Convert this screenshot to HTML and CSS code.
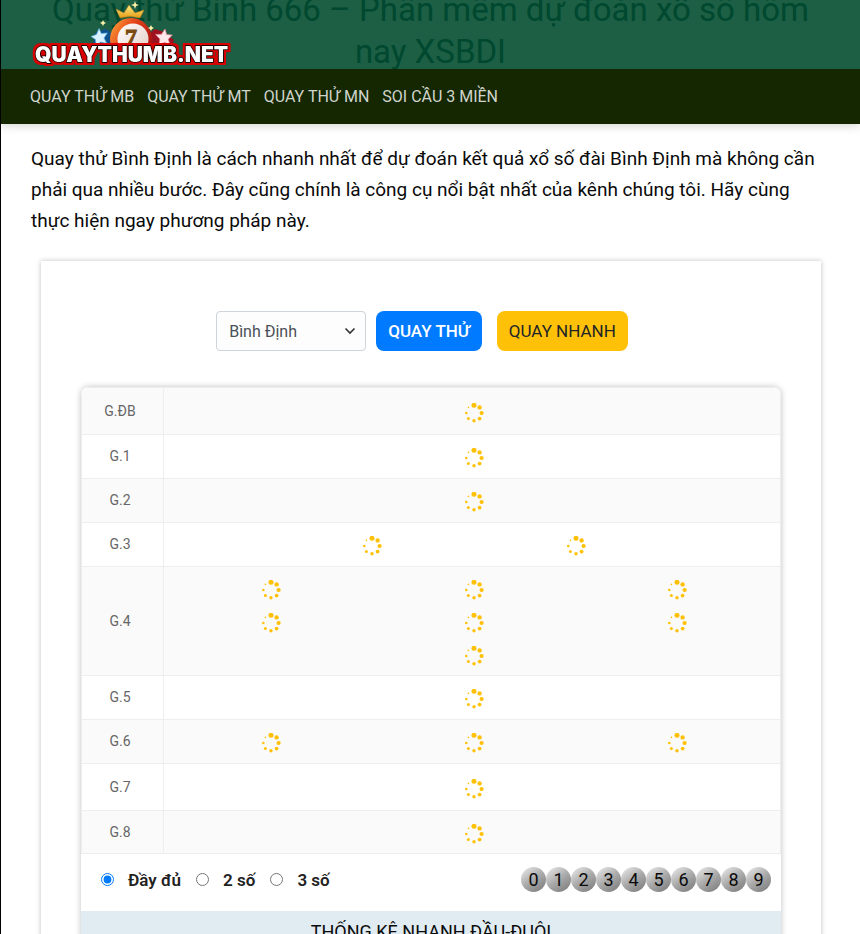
FILE: index.html
```
<!DOCTYPE html>
<html lang="vi">
<head>
  <meta charset="UTF-8" />
  <meta name="viewport" content="width=device-width, initial-scale=1.0" />
  <title>Quay thử Bình Định</title>
  <link rel="stylesheet" href="styles.css">
</head>
<body>
  <!-- Chấm tròn loading dùng chung -->
  <svg class="defs" aria-hidden="true">
    <symbol id="spin" viewBox="0 0 20 20">
      <circle cx="10" cy="2.3" r="2.5"/>
      <circle cx="15.6" cy="4.4" r="2.2"/>
      <circle cx="17.6" cy="10" r="2.1"/>
      <circle cx="15.6" cy="15.6" r="1.9"/>
      <circle cx="10" cy="17.7" r="1.7"/>
      <circle cx="4.4" cy="15.6" r="1.5"/>
      <circle cx="2.3" cy="10" r="1.3"/>
      <circle cx="4.4" cy="4.4" r="0.8"/>
    </symbol>
  </svg>

  <header class="header">
    <div class="banner">
      <h1 class="title">Quay thử Bình 666 – Phần mềm dự đoán xổ số hôm nay XSBDI</h1>
      <a class="logo" href="#" aria-label="QUAYTHUMB.NET">
        <svg width="206" height="69" viewBox="0 0 206 69">
          <defs>
            <linearGradient id="gold" x1="0" y1="0" x2="0" y2="1">
              <stop offset="0" stop-color="#fff08a"/>
              <stop offset="1" stop-color="#e39a14"/>
            </linearGradient>
            <linearGradient id="red" x1="0" y1="0" x2="1" y2="0.6">
              <stop offset="0" stop-color="#ffb13c"/>
              <stop offset="0.45" stop-color="#e8481c"/>
              <stop offset="1" stop-color="#a90f10"/>
            </linearGradient>
            <linearGradient id="pearl" x1="0" y1="0" x2="1" y2="1">
              <stop offset="0" stop-color="#ffffff"/>
              <stop offset="1" stop-color="#e4cdc5"/>
            </linearGradient>
            <!-- viền đỏ quanh chữ -->
            <filter id="outline" x="-5%" y="-30%" width="110%" height="160%">
              <feMorphology in="SourceAlpha" operator="dilate" radius="2" result="big"/>
              <feFlood flood-color="#d80000"/>
              <feComposite in2="big" operator="in"/>
              <feMerge>
                <feMergeNode/>
                <feMergeNode in="SourceGraphic"/>
              </feMerge>
            </filter>
          </defs>
          <path d="M66 32l10-3 7 5v14H62z" fill="#11528c"/>
          <path d="M121 32l4-3 9 3 10 8-3 8h-22z" fill="#9c1220"/>
          <path d="M69 28.500l2.300 5 6-.5-3.300 5 2.800 5.500-6-1.500-4.800 3.500-.5-6-4.500-3 5.500-2z" fill="#d9f2ff" stroke="#5fb4e6" stroke-width="0.7"/>
          <path d="M135 29l1.700 5.500 5.600.5-4 4.200 1.700 5.600-5.500-2.300-5.500 2.500.8-6-4.300-4.500 6-.3z" fill="#ffe9ea" stroke="#e8808c" stroke-width="0.7"/>
          <circle cx="101" cy="39" r="21" fill="url(#red)"/>
          <circle cx="103" cy="39" r="15.500" fill="url(#pearl)"/>
          <path d="M90 18l-4-9 8 4 5-8 6 8 9-3-4 8q-10-3-20 0z" fill="url(#gold)" stroke="#c47d10" stroke-width="0.5"/>
          <path d="M105 1l1 3 3 1-3 1-1 3-1-3-3-1 3-1zM73 20l1 2 2 1-2 1-1 2-1-2-2-1 2-1zM121 25l1 2 2 1-2 1-1 2-1-2-2-1 2-1z" fill="#fff3a8"/>
          <text class="logo-seven" x="95" y="45">7</text>
          <g filter="url(#outline)">
            <text class="logo-text" x="5" y="62">QUAYTHUMB.NET</text>
          </g>
        </svg>
      </a>
    </div>
    <nav class="nav">
      <a href="#">QUAY THỬ MB</a>
      <a href="#">QUAY THỬ MT</a>
      <a href="#">QUAY THỬ MN</a>
      <a href="#">SOI CẦU 3 MIỀN</a>
    </nav>
  </header>

  <main class="main">
    <p class="intro">Quay thử Bình Định là cách nhanh nhất để dự đoán kết quả xổ số đài Bình Định mà không cần phải qua nhiều bước. Đây cũng chính là công cụ nổi bật nhất của kênh chúng tôi. Hãy cùng thực hiện ngay phương pháp này.</p>

    <section class="card">
      <form class="controls">
        <select class="province" aria-label="Chọn tỉnh">
          <option>Bình Định</option>
        </select>
        <button type="button" class="btn btn-primary">QUAY THỬ</button>
        <button type="button" class="btn btn-warning">QUAY NHANH</button>
      </form>

      <div class="result">
        <table class="prizes">
          <tbody>
            <tr class="tall">
              <th scope="row">G.ĐB</th>
              <td><div class="balls"><span><svg><use href="#spin"/></svg></span></div></td>
            </tr>
            <tr>
              <th scope="row">G.1</th>
              <td><div class="balls"><span><svg><use href="#spin"/></svg></span></div></td>
            </tr>
            <tr>
              <th scope="row">G.2</th>
              <td><div class="balls"><span><svg><use href="#spin"/></svg></span></div></td>
            </tr>
            <tr>
              <th scope="row">G.3</th>
              <td><div class="balls">
                <span><svg><use href="#spin"/></svg></span>
                <span><svg><use href="#spin"/></svg></span>
              </div></td>
            </tr>
            <tr class="short">
              <th scope="row">G.4</th>
              <td><div class="balls">
                <span><svg><use href="#spin"/></svg></span>
                <span><svg><use href="#spin"/></svg></span>
                <span><svg><use href="#spin"/></svg></span>
                <span><svg><use href="#spin"/></svg></span>
                <span><svg><use href="#spin"/></svg></span>
                <span><svg><use href="#spin"/></svg></span>
                <span><svg><use href="#spin"/></svg></span>
              </div></td>
            </tr>
            <tr>
              <th scope="row">G.5</th>
              <td><div class="balls"><span><svg><use href="#spin"/></svg></span></div></td>
            </tr>
            <tr>
              <th scope="row">G.6</th>
              <td><div class="balls">
                <span><svg><use href="#spin"/></svg></span>
                <span><svg><use href="#spin"/></svg></span>
                <span><svg><use href="#spin"/></svg></span>
              </div></td>
            </tr>
            <tr class="tall">
              <th scope="row">G.7</th>
              <td><div class="balls"><span><svg><use href="#spin"/></svg></span></div></td>
            </tr>
            <tr class="short">
              <th scope="row">G.8</th>
              <td><div class="balls"><span><svg><use href="#spin"/></svg></span></div></td>
            </tr>
          </tbody>
        </table>

        <div class="filter">
          <div class="modes">
            <label><input type="radio" name="mode" checked>Đầy đủ</label>
            <label><input type="radio" name="mode">2 số</label>
            <label><input type="radio" name="mode">3 số</label>
          </div>
          <div class="digits">
            <button type="button">0</button>
            <button type="button">1</button>
            <button type="button">2</button>
            <button type="button">3</button>
            <button type="button">4</button>
            <button type="button">5</button>
            <button type="button">6</button>
            <button type="button">7</button>
            <button type="button">8</button>
            <button type="button">9</button>
          </div>
        </div>

        <h2 class="stats-title">THỐNG KÊ NHANH ĐẦU-ĐUÔI</h2>
      </div>
    </section>
  </main>
</body>
</html>
```
FILE: styles.css
```
* {
  box-sizing: border-box;
}
html {
  overflow: hidden;
}
body {
  margin: 0;
  border-left: 1px solid #000;
  background: #fff;
  color: #0a0a0a;
  font-family: Roboto, sans-serif;
  font-size: 18px;
}
.defs {
  display: none;
}

/* Header */
.header {
  box-shadow: 0 1px 10px rgba(0, 0, 0, 0.2);
}
.banner {
  position: relative;
  display: flex;
  align-items: flex-end;
  height: 69px;
  padding: 0 30px;
  overflow: hidden;
  background: #1c5f45;
}
.title {
  flex: 1;
  margin: 0 0 -4px;
  color: #00482f;
  font-size: 33px;
  font-weight: 400;
  line-height: 42px;
  text-align: center;
}
.logo {
  position: absolute;
  left: 29px;
  top: 0;
}
.logo svg {
  display: block;
}
.logo-text {
  fill: #fff;
  stroke: #1a0505;
  stroke-width: 2;
  stroke-linejoin: round;
  paint-order: stroke;
  font-family: Inter, sans-serif;
  font-size: 21px;
  font-weight: 900;
}
.logo-seven {
  fill: #7a4a10;
  stroke: #7a4a10;
  font-family: "Liberation Serif", serif;
  font-size: 24px;
  font-weight: 700;
}
.nav {
  display: flex;
  align-items: center;
  gap: 13px;
  height: 55px;
  padding: 0 29px;
  background: #142701;
}
.nav a {
  color: #d0d4cc;
  font-size: 16px;
  font-weight: 400;
  text-decoration: none;
}

/* Content */
.main {
  padding: 19px 29px 0 30px;
}
.intro {
  margin: 0 0 25px;
  font-size: 19px;
  line-height: 31px;
}
.card {
  margin: 0 10px;
  padding: 50px 40px 0;
  box-shadow: 0 0 5px rgba(0, 0, 0, 0.25);
}
.controls {
  display: flex;
  justify-content: center;
  margin: 0 18px 36px 0;
}
.province {
  width: 150px;
  height: 40px;
  margin-right: 10px;
  padding: 0 12px;
  border: 1px solid #ced4da;
  border-radius: 4px;
  appearance: none;
  background: #fdfdfd url("data:image/svg+xml,%3Csvg xmlns='http://www.w3.org/2000/svg' width='12' height='8' fill='none' stroke='%23333' stroke-width='1.6'%3E%3Cpath d='M1.5 1.5L6 6l4.500-4.500'/%3E%3C/svg%3E") no-repeat right 9px center;
  color: #495057;
  font: 16px Roboto, sans-serif;
}
.btn {
  height: 40px;
  padding: 0 12px;
  border: 0;
  border-radius: 8px;
  font: 500 17px Roboto, sans-serif;
  cursor: pointer;
}
.btn-primary {
  margin-right: 15px;
  background: #007bff;
  color: #fff;
}
.btn-warning {
  background: #ffc107;
  color: #212529;
  font-weight: 400;
}

/* Result table */
.result {
  border-radius: 8px 8px 0 0;
  box-shadow: 0 0 6px rgba(0, 0, 0, 0.25);
  overflow: hidden;
}
.prizes {
  width: 100%;
  border: 1px solid #eee;
  border-bottom: 0;
  border-spacing: 0;
  table-layout: fixed;
}
.prizes th {
  width: 82px;
  padding: 0 10px 1px 5px;
  border-right: 1px solid #eee;
  border-bottom: 1px solid #eee;
  color: #666;
  font-size: 14px;
  font-weight: 400;
}
.prizes td {
  padding: 5px 1px 5px 5px;
  border-bottom: 1px solid #eee;
}
.prizes tr:nth-child(odd) {
  background: #fafafa;
}
.balls {
  display: flex;
  flex-wrap: wrap;
  justify-content: center;
}
.balls span {
  display: flex;
  justify-content: center;
  flex: 0 0 33.33%;
  height: 33px;
  padding-top: 8px;
}
.tall .balls span {
  height: 36px;
  padding-top: 10px;
}
.prizes .short td {
  padding-bottom: 4px;
}
.balls svg {
  width: 20px;
  height: 20px;
  fill: #ffc107;
}
.filter {
  display: flex;
  justify-content: space-between;
  padding: 13px 10px 19px;
}
.modes,
.modes label,
.digits {
  display: flex;
  align-items: center;
}
.modes label {
  color: #222;
  font-size: 17px;
  font-weight: 600;
}
.modes input {
  width: 13px;
  height: 13px;
  margin: 0 14px 0 10px;
  accent-color: #007bff;
}
.modes label + label input {
  margin-left: 15px;
}
.digits button {
  width: 25px;
  height: 25px;
  padding: 0;
  border: 0;
  border-radius: 50%;
  background: linear-gradient(145deg, #eee, #aaa 50%, #777);
  color: #0a0a0a;
  font: 18px Roboto, sans-serif;
}
.stats-title {
  margin: 0;
  padding: 5px 0;
  background: #e1ecf2;
  font-size: 18px;
  font-weight: 400;
  line-height: 31px;
  text-align: center;
}
```
